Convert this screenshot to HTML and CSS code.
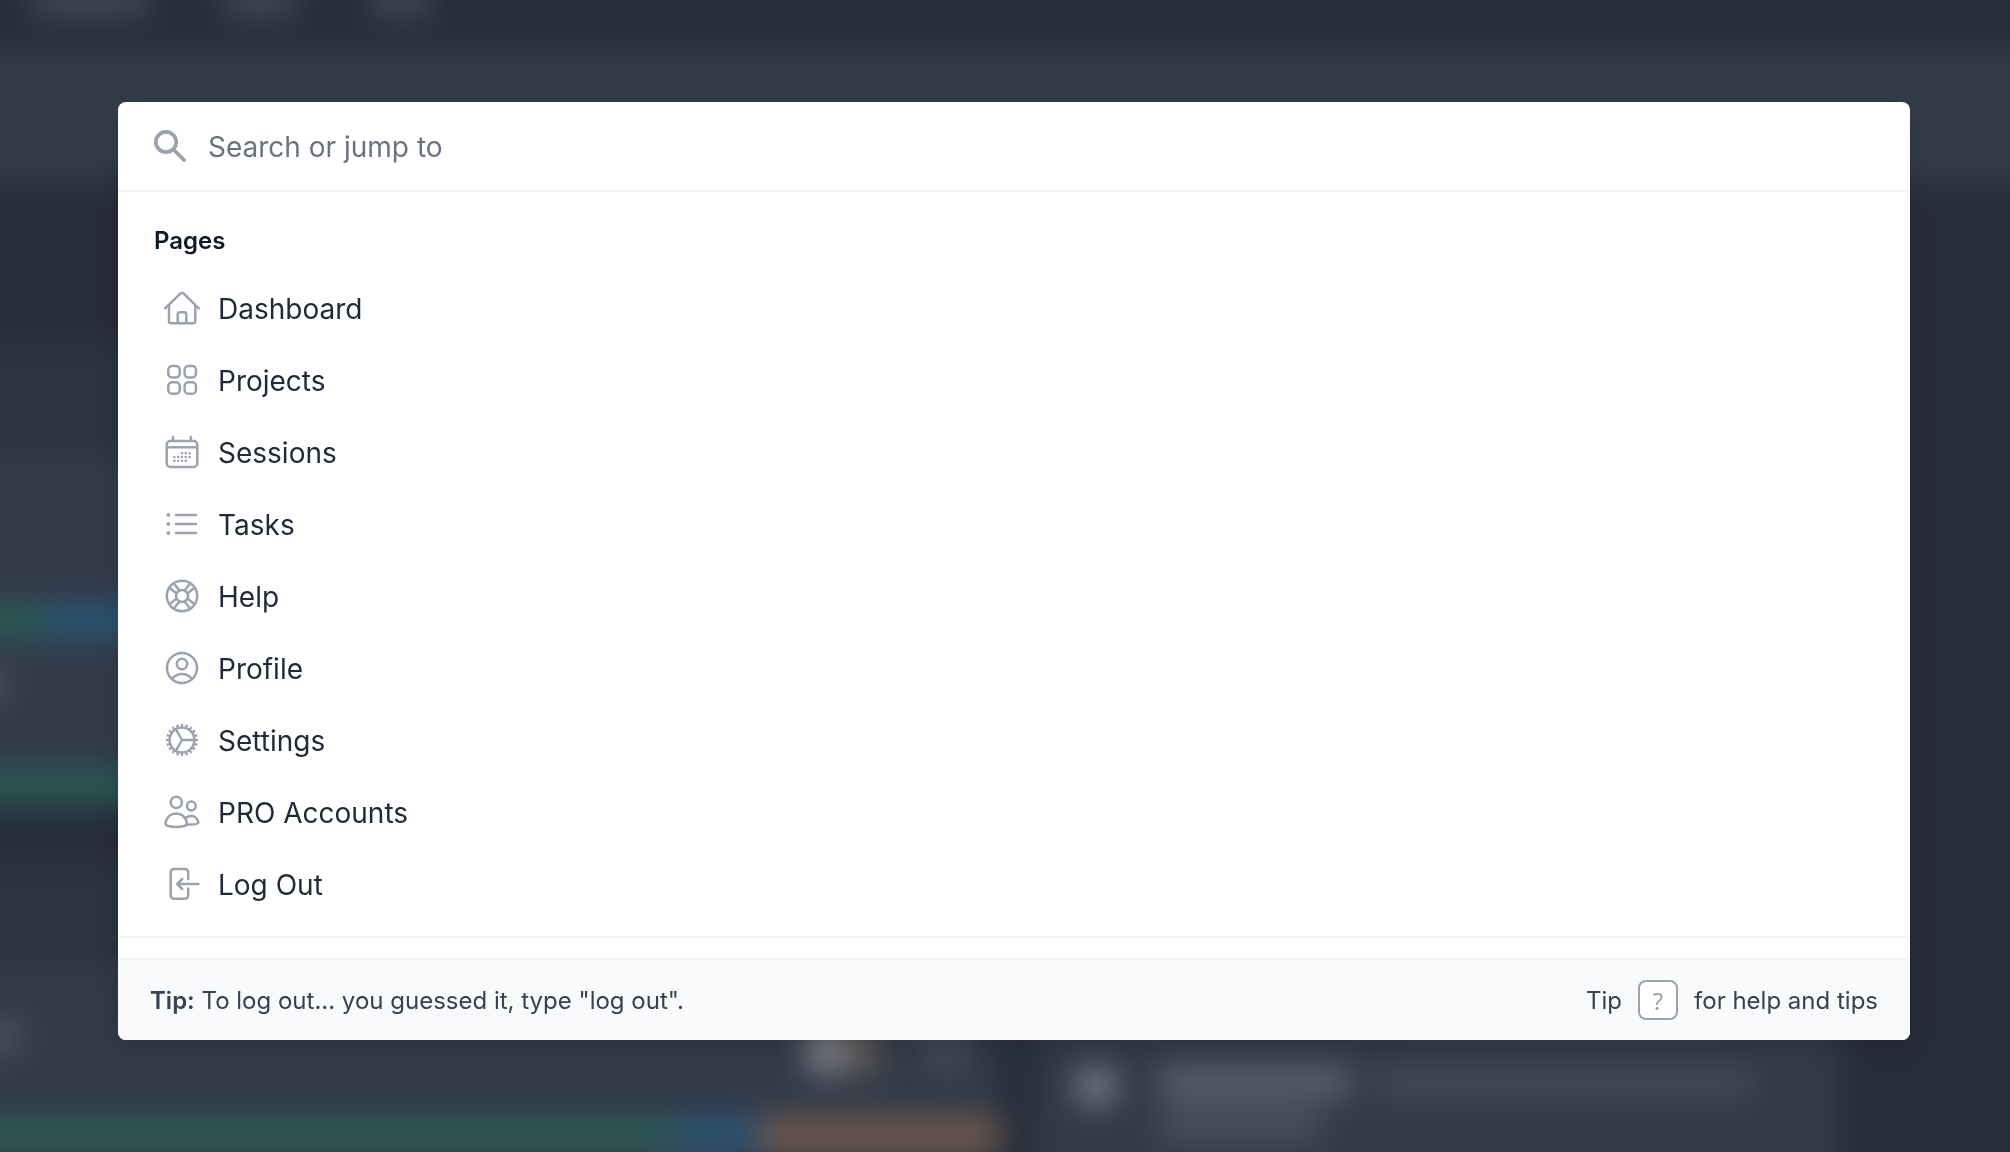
FILE: index.html
```html
<!DOCTYPE html>
<html lang="en">
<head>
    <meta charset="UTF-8">
    <meta name="viewport" content="width=device-width, initial-scale=1.0">
    <title>Search</title>
    <link rel="stylesheet" href="styles.css">
</head>
<body>

    <!-- Page behind the search dialog -->
    <div class="page" aria-hidden="true">
        <div class="nav">
            <div class="nav-item wide"></div>
            <div class="nav-item"></div>
            <div class="nav-item short"></div>
        </div>
        <div class="banner"></div>
        <div class="columns">
            <div class="column-left">
                <div class="section-head first"></div>
                <div class="card tall">
                    <div class="bar"><div class="green" style="width: 9%"></div><div class="blue"></div></div>
                    <div class="row-text"></div>
                    <div class="bar"><div class="green" style="width: 100%"></div></div>
                </div>
                <div class="section-head second"></div>
                <div class="card last">
                    <div class="people">
                        <div class="row-text"></div>
                        <div class="avatar"></div>
                        <div class="avatar brown"></div>
                        <div class="comments"></div>
                    </div>
                    <div class="bar"><div class="green" style="width: 69%"></div><div class="blue" style="width: 8%"></div><div class="orange"></div></div>
                </div>
            </div>
            <div class="feed">
                <div class="feed-avatar"></div>
                <div class="feed-text">
                    <div class="feed-line"><div class="name"></div><div class="message"></div></div>
                    <div class="feed-line"><div class="second-line"></div></div>
                </div>
            </div>
        </div>
    </div>

    <div class="overlay">
        <div class="dialog" role="dialog" aria-label="Search">
            <div class="search">
                <svg class="search-icon" viewBox="0 0 32 32"><circle cx="12" cy="12" r="10.2"/><path d="M19.5 19.5 30 30"/></svg>
                <input type="text" class="search-input" placeholder="Search or jump to" aria-label="Search or jump to">
            </div>

            <div class="results">
                <h2>Pages</h2>
                <ul>
                    <li><a href="#">
                        <svg class="icon" viewBox="0 0 36 36"><path d="M1.2 17.3 16.8 2.2Q18 1.2 19.2 2.2L34.8 17.3M5 14V30.3Q5 32.3 7 32.3H29.3Q31.3 32.3 31.3 30.3V14M13.7 32V23.3Q13.7 21.3 15.7 21.3H20.3Q22.3 21.3 22.3 23.3V32"/></svg>
                        Dashboard
                    </a></li>
                    <li><a href="#">
                        <svg class="icon" viewBox="0 0 36 36"><rect x="4.3" y="3" width="11.4" height="11.4" rx="3.8"/><rect x="20.6" y="3" width="11.4" height="11.4" rx="3.8"/><rect x="4.3" y="19.3" width="11.4" height="11.4" rx="3.8"/><rect x="20.6" y="19.3" width="11.4" height="11.4" rx="3.8"/></svg>
                        Projects
                    </a></li>
                    <li><a href="#">
                        <svg class="icon" viewBox="0 0 36 36"><rect x="2.7" y="6" width="30.6" height="26" rx="3.5"/><path d="M3 12.3H33M9 2V6M26.8 2V6"/><path class="dots" d="M18 18.2h0M21.8 18.2h0M25.6 18.2h0M10.4 22h0M14.2 22h0M18 22h0M21.8 22h0M25.6 22h0M10.4 25.8h0M14.2 25.8h0M18 25.8h0M21.8 25.8h0"/></svg>
                        Sessions
                    </a></li>
                    <li><a href="#">
                        <svg class="icon" viewBox="0 0 36 36"><path d="M12 8H32M12 17H32M12 26H32"/><path class="bullets" d="M4.3 8h0M4.3 17h0M4.3 26h0"/></svg>
                        Tasks
                    </a></li>
                    <li><a href="#">
                        <svg class="icon" viewBox="0 0 36 36"><circle cx="18" cy="17" r="15.2"/><circle cx="18" cy="17" r="6"/><path d="M20.6 11.4 25 6M23.6 14.4 29 10M23.6 19.6 29 24M20.6 22.6 25 28M15.4 22.6 11 28M12.4 19.6 7 24M12.4 14.4 7 10M15.4 11.4 11 6"/></svg>
                        Help
                    </a></li>
                    <li><a href="#">
                        <svg class="icon" viewBox="0 0 36 36"><circle cx="18" cy="17" r="15"/><circle cx="18" cy="13" r="5.2"/><path d="M7.8 28Q12 22.9 18 22.9T28.2 28"/></svg>
                        Profile
                    </a></li>
                    <li><a href="#">
                        <svg class="icon" viewBox="0 0 36 36"><circle cx="18" cy="17" r="12.4"/><circle class="teeth" cx="18" cy="17" r="14.5" pathLength="80"/><path d="M18 17H30.5M18 17 11.8 6.2M18 17 11.8 27.8"/></svg>
                        Settings
                    </a></li>
                    <li><a href="#">
                        <svg class="icon" viewBox="0 0 36 36"><circle cx="12.3" cy="7.4" r="5.6"/><circle cx="27.3" cy="11" r="4.4"/><path d="M1.5 28.5C2.5 22 7 18.4 12.2 18.4S22 22 23 28.5C22.9 31 17 32 12.2 32S1.6 31 1.5 28.5ZM21.5 23C23.4 21.3 25.2 20.9 27.2 20.9 31.2 20.9 33.8 24 34.4 27.3 34.2 29 30 29.7 23.5 29.6"/></svg>
                        PRO Accounts
                    </a></li>
                    <li><a href="#">
                        <svg class="icon" viewBox="0 0 36 36"><path d="M24.2 12V5.5Q24.2 2 20.7 2H10.2Q6.7 2 6.7 5.5V28.3Q6.7 31.8 10.2 31.8H20.7Q24.2 31.8 24.2 28.3V21.5M34.5 17H13.5M18.3 11.8 13.2 17 18.3 22.2"/></svg>
                        Log Out
                    </a></li>
                </ul>
            </div>

            <div class="footer">
                <div><strong>Tip:</strong> To log out... you guessed it, type "log out".</div>
                <div class="shortcut">Tip <kbd>?</kbd> for help and tips</div>
            </div>
        </div>
    </div>

</body>
</html>
```
FILE: styles.css
```css
* {
    box-sizing: border-box;
}
body {
    margin: 0;
    font-family: Inter, "Liberation Sans", sans-serif;
    font-optical-sizing: none;
    background-color: #272c39;
}

/* Page behind the dialog, a bit larger than the window so its edges blur outside */
.page {
    position: fixed;
    inset: -48px;
    display: flex;
    flex-direction: column;
    overflow: hidden;
    background-color: #272c39;
    filter: blur(16px);
}
.nav {
    display: flex;
    gap: 72px;
    height: 98px;
    padding: 32px 0 0 78px;
    flex-shrink: 0;
}
.nav-item {
    width: 76px;
    height: 32px;
    background-color: #434956;
}
.nav-item.wide {
    width: 120px;
}
.nav-item.short {
    width: 62px;
}
.banner {
    height: 134px;
    background-color: #323b49;
    flex-shrink: 0;
}
.columns {
    display: flex;
    flex: 1;
    gap: 36px;
    padding-right: 216px;
}
.column-left {
    flex: 0 0 1048px;
}
.section-head {
    background-color: #2e3341;
}
.section-head.first {
    height: 116px;
    margin-top: 156px;
}
.section-head.second {
    height: 110px;
    margin-top: 56px;
}
.card {
    background-color: #323a48;
}
.card.tall {
    padding-top: 148px;
}
.card.last {
    height: 230px;
    padding-top: 48px;
}
.bar {
    display: flex;
    height: 34px;
}
.green {
    background-color: #285c55;
}
.blue {
    flex-grow: 1;
    background-color: #285677;
}
.card.last .blue {
    flex-grow: 0;
}
.orange {
    flex-grow: 1;
    background-color: #735d4c;
}
.row-text {
    width: 54px;
    height: 28px;
    background-color: #4f565e;
}
.card.tall .row-text {
    margin: 34px 0 70px;
}
.people {
    display: flex;
    align-items: center;
    height: 100px;
    padding-bottom: 34px;
}
.people .row-text {
    width: 70px;
    margin-right: 784px;
    margin-bottom: 28px;
}
.avatar {
    width: 40px;
    height: 48px;
    background-color: #86868c;
    border-radius: 20px;
}
.avatar.brown {
    width: 32px;
    background-color: #655c57;
}
.comments {
    width: 40px;
    height: 40px;
    margin-left: 48px;
    background-color: #434d57;
}
.feed {
    display: flex;
    flex: 1;
    align-items: flex-end;
    gap: 44px;
    padding: 0 90px 58px 40px;
    background-color: #323a48;
}
.feed-avatar {
    width: 40px;
    height: 40px;
    margin-bottom: 36px;
    border-radius: 20px;
    background-color: #77848f;
}
.feed-text {
    flex: 1;
}
.feed-line {
    display: flex;
    gap: 28px;
    margin-top: 12px;
}
.name {
    width: 190px;
    height: 32px;
    background-color: #5c626d;
}
.message {
    flex: 1;
    height: 32px;
    background-color: #424957;
}
.second-line {
    width: 160px;
    height: 32px;
    background-color: #4b525e;
}

/* Search dialog */
.overlay {
    position: fixed;
    inset: 0;
    padding: 102px 100px 0 118px;
}
.dialog {
    overflow: hidden;
    background-color: #fff;
    border-radius: 8px;
    box-shadow: 0 8px 24px rgba(0, 0, 0, 0.12);
}
.search {
    display: flex;
    align-items: center;
    gap: 22px;
    padding: 0 36px;
    border-bottom: 2px solid #f3f4f6;
}
.search-icon {
    width: 32px;
    height: 32px;
    fill: none;
    stroke: #9ca3af;
    stroke-width: 3.8;
    stroke-linecap: round;
}
.search-input {
    flex: 1;
    height: 88px;
    padding: 2px 0 0;
    border: none;
    outline: none;
    font: inherit;
    font-size: 28px;
    color: #1f2937;
    background: none;
}
.search-input::placeholder {
    color: #6b7280;
}
.results {
    padding: 25px 0 15px;
    margin-bottom: 20px;
    border-bottom: 2px solid #f3f4f6;
}
h2 {
    margin: 0 0 8px;
    padding: 0 36px;
    font-size: 24px;
    font-weight: 600;
    line-height: 48px;
    color: #111827;
}
ul {
    margin: 0;
    padding: 0 16px;
    list-style: none;
}
li a {
    display: flex;
    align-items: center;
    gap: 18px;
    height: 72px;
    padding: 0 30px;
    border-radius: 8px;
    font-size: 28px;
    color: #1f2937;
    text-decoration: none;
}
li a:hover {
    background-color: #f3f4f6;
}
.icon {
    width: 36px;
    height: 36px;
    fill: none;
    stroke: #9ca3af;
    stroke-width: 2.5;
    stroke-linecap: round;
    stroke-linejoin: round;
}
.dots {
    stroke-width: 2.6;
}
.bullets {
    stroke-width: 3.8;
}
.teeth {
    stroke-width: 3;
    stroke-linecap: butt;
    stroke-dasharray: 2 2;
    stroke-dashoffset: 1;
}
.footer {
    display: flex;
    justify-content: space-between;
    align-items: center;
    height: 82px;
    padding: 0 32px;
    border-top: 2px solid #f3f4f6;
    background-color: #f9fafb;
    font-size: 24px;
    color: #374151;
}
.footer strong {
    font-weight: 600;
}
.shortcut {
    display: flex;
    align-items: center;
    gap: 16px;
}
kbd {
    display: flex;
    align-items: center;
    justify-content: center;
    width: 40px;
    height: 40px;
    border: 2px solid #9ca3af;
    border-radius: 8px;
    background-color: #fff;
    font-family: "Noto Sans", sans-serif;
    color: #9ca3af;
}
```
